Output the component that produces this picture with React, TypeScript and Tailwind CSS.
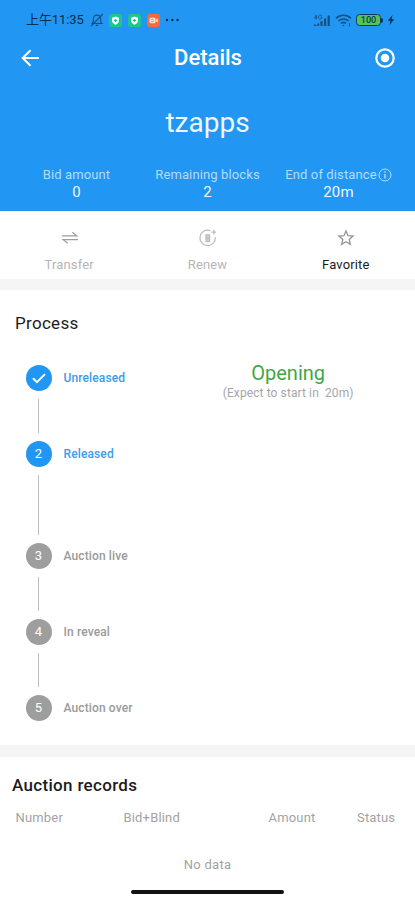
import { ReactNode } from "react";

type Step = { num: number; label: string; state: "done" | "active" | "todo"; line?: string };

const STEPS: Step[] = [
  { num: 1, label: "Unreleased", state: "done", line: "h-[76px]" },
  { num: 2, label: "Released", state: "active", line: "h-[102px]" },
  { num: 3, label: "Auction live", state: "todo", line: "h-[76px]" },
  { num: 4, label: "In reveal", state: "todo", line: "h-[76px]" },
  { num: 5, label: "Auction over", state: "todo" },
];

function StatusBar() {
  return (
    <div className="flex h-10 items-center justify-between pl-[26px] pr-[20px] text-[#14507f]">
      <div className="flex items-center">
        <span className="w-[60px] text-[13px] leading-5 tracking-[-0.1px] whitespace-nowrap text-[#0b2d4d]">上午11:35</span>
        <svg className="ml-[4px]" width="14" height="14" viewBox="0 0 14 14" fill="none" stroke="currentColor" strokeWidth="1.1">
          <path d="M2 10.5h10l-1.3-1.8V6c0-2.2-1.4-3.9-3.7-3.9S3.3 3.8 3.3 6v2.7L2 10.5ZM5.7 12.4h2.6M1.2 13 12.8 1" />
        </svg>
        <ShieldBadge className="ml-[5px]" />
        <ShieldBadge className="ml-[6px]" />
        <svg className="ml-[6px]" width="13" height="13" viewBox="0 0 13 13">
          <rect width="13" height="13" rx="2.5" fill="#f46a3c" />
          <rect x="2.5" y="3.7" width="6" height="5.6" rx="1.2" fill="#ffe3d8" />
          <path d="M9 5.7 10.8 4.3v4.4L9 7.3z" fill="#ffe3d8" />
          <path d="M4 5.5h3M4 7.5h3" stroke="#f46a3c" strokeWidth=".7" />
        </svg>
        <svg className="ml-[5px]" width="15" height="4" viewBox="0 0 15 4" fill="#0b2d4d">
          <circle cx="2" cy="2" r="1.2" />
          <circle cx="7.3" cy="2" r="1.2" />
          <circle cx="12.6" cy="2" r="1.2" />
        </svg>
      </div>
      <div className="flex items-center">
        <svg width="18" height="13" viewBox="0 0 18 13" fill="currentColor">
          <path d="M0 12h2v-1.6H0zM3.2 12h2V9.5h-2zM6.4 12h2.200V7.300H6.400zM10 12h2.200V4.500H10zM13.600 12h2.200V1.500h-2.200z" />
          <path d="M2.400 5.200V1L.4 4h3M7.800 1.800C6.400.4 4.500 1.200 4.500 3s1.900 2.600 3.300 1.300V3.200H6.500" fill="none" stroke="currentColor" strokeWidth=".8" />
        </svg>
        <svg className="ml-[3px]" width="18" height="13" viewBox="0 0 18 13" fill="none" stroke="currentColor" strokeWidth="1.6">
          <path d="M1 4.3c4.2-4 10.800-4 15 0M3.5 7c2.800-2.700 7.200-2.700 10 0M6 9.5c1.500-1.300 3.500-1.300 5 0" />
          <circle cx="8.5" cy="11.5" r=".8" fill="currentColor" stroke="none" />
          <path d="M14.5 9v3.5" strokeWidth="1" />
        </svg>
        <div className="ml-[3px] flex h-[12px] w-[25px] items-center justify-center rounded-[3.5px] border-[1.5px] border-[#0d3a63] bg-[#55c552] text-[9px] leading-none font-medium text-[#0d3a63]">
          100
        </div>
        <div className="h-[5px] w-[2px] rounded-r-sm bg-[#0d3a63]" />
        <svg className="ml-[4px]" width="8" height="12" viewBox="0 0 8 12" fill="#0b2d4d">
          <path d="M5.500 1 .8 6.700h2.700L2.500 11l4.700-5.800H4.500z" />
        </svg>
      </div>
    </div>
  );
}

function ShieldBadge({ className }: { className: string }) {
  return (
    <svg className={className} width="13" height="13" viewBox="0 0 13 13">
      <rect width="13" height="13" rx="2.5" fill="#1bc692" />
      <path d="M6.500 2.500 10 3.800v2.700c0 2.100-1.500 3.300-3.500 4.200C4.500 9.800 3 8.600 3 6.500V3.800z" fill="#fff" />
      <path d="M6.500 4.900v3M5 6.400h3" stroke="#1bc692" strokeWidth="1.100" />
    </svg>
  );
}

function Stat({ label, value }: { label: ReactNode; value: string }) {
  return (
    <div className="flex flex-1 flex-col items-center">
      <span className="flex h-[18px] items-center text-[13px] leading-[18px] tracking-[0.12px] whitespace-nowrap text-[#b5dcfb]">
        {label}
      </span>
      <span className="text-[15px] leading-[17px] tracking-[0.1px] text-[#f0f8ff]">{value}</span>
    </div>
  );
}

function Action({ icon, label, className }: { icon: ReactNode; label: string; className: string }) {
  return (
    <div className="flex flex-1 flex-col items-center pt-[17px]">
      <div className="flex h-5 items-center">{icon}</div>
      <span className={`mt-[8px] text-[13px] leading-[18px] tracking-[0.15px] ${className}`}>{label}</span>
    </div>
  );
}

function StepRow({ num, label, state, line }: Step) {
  const on = state !== "todo";
  return (
    <div className={`flex ${line ?? "h-[26px]"}`}>
      <div className="flex w-[26px] flex-col items-center">
        <div className={`flex size-[26px] shrink-0 items-center justify-center rounded-full text-[13px] text-white ${on ? "bg-[#2196f3]" : "bg-[#9e9e9e]"}`}>
          {state === "done" ? (
            <svg width="16" height="16" viewBox="0 0 16 16" fill="none" stroke="white" strokeWidth="2">
              <path d="m2 8.300 3.900 3.900L14 4.100" />
            </svg>
          ) : (
            num
          )}
        </div>
        {line && <div className="my-2 w-px flex-1 bg-[#bdbdbd]" />}
      </div>
      <span className={`ml-3 text-[12px] leading-[26px] font-medium tracking-[0.12px] ${on ? "text-[#3d9be9]" : "text-[#9a9a9a]"}`}>
        {label}
      </span>
    </div>
  );
}

export default function App() {
  return (
    <div className="flex h-[900px] w-[415px] flex-col overflow-hidden bg-white font-['Roboto','Noto_Sans_CJK_SC',sans-serif]">
      <header className="h-[211px] shrink-0 bg-[#2196f3]">
        <StatusBar />
        <div className="flex h-9 items-center justify-between pl-[21px] pr-[20px]">
          <svg width="20" height="18" viewBox="0 0 20 18" fill="none" stroke="white" strokeWidth="2">
            <path d="M9.500 1.200 1.700 9l7.800 7.800M1.700 9H18" />
          </svg>
          <h1 className="text-[22px] leading-9 font-medium text-white">Details</h1>
          <svg width="20" height="20" viewBox="0 0 20 20" fill="none">
            <circle cx="10" cy="10" r="8.700" stroke="white" strokeWidth="2.200" />
            <circle cx="10" cy="10" r="4.300" fill="white" />
          </svg>
        </div>
        <div className="mt-[29px] text-center text-[28px] leading-9 text-[#eef7ff]">tzapps</div>
        <div className="mt-[25px] flex px-[11px]">
          <Stat label="Bid amount" value="0" />
          <Stat label="Remaining blocks" value="2" />
          <Stat
            label={
              <>
                End of distance
                <svg className="ml-px" width="14" height="14" viewBox="0 0 14 14" fill="none" stroke="currentColor">
                  <circle cx="7" cy="7" r="6" />
                  <path d="M7 3.200v1.500M7 6v4.500" strokeWidth="1.400" />
                </svg>
              </>
            }
            value="20m"
          />
        </div>
      </header>

      <div className="flex h-[68px] shrink-0">
        <Action
          label="Transfer"
          className="text-[#b5b5b5]"
          icon={
            <svg className="ml-[2px]" width="18" height="16" viewBox="0 0 18 16" fill="none" stroke="#9e9e9e" strokeWidth="1.200">
              <path d="M1 5.800h14.800L11.300 2.300M17 9.700H2.200l4.500 3.500" />
            </svg>
          }
        />
        <Action
          label="Renew"
          className="text-[#b5b5b5]"
          icon={
            <svg className="ml-px" width="20" height="20" viewBox="0 0 20 20" fill="none" stroke="#bcbcbc" strokeWidth="1.200">
              <path d="M12.500 2.700A7.700 7.700 0 1 0 17.300 9" />
              <path d="M15.800 1.800v4.600M13.500 4.100h4.600" />
              <rect x="8" y="6.800" width="3.600" height="6.800" fill="#cfcfcf" />
              <path d="M8 10.200h3.600" />
            </svg>
          }
        />
        <Action
          label="Favorite"
          className="text-[#1c1c1c]"
          icon={
            <svg className="ml-px" width="18" height="18" viewBox="0 0 18 18" fill="none" stroke="#969696" strokeWidth="1.300">
              <path d="m9 2 2 4.700 5.100.4-3.900 3.300 1.200 5L9 12.700l-4.400 2.700 1.200-5-3.900-3.300L7 6.700z" />
            </svg>
          }
        />
      </div>
      <div className="h-[11px] shrink-0 bg-[#f5f5f5]" />

      <section className="h-[455px] shrink-0">
        <h2 className="pt-[21px] pl-[15px] text-[17px] leading-6 tracking-[0.3px] text-[#1c1c1c]">Process</h2>
        <div className="mt-[30px] flex pl-[25.500px]">
          <div className="w-[136px]">
            {STEPS.map((step) => (
              <StepRow key={step.num} {...step} />
            ))}
          </div>
          <div className="flex w-[254px] flex-col items-center">
            <span className="mt-[-4px] text-[20px] leading-[25px] text-[#3fa843]">Opening</span>
            <span className="text-[12px] leading-[14px] tracking-[0.1px] whitespace-pre text-[#a6a6a6]">(Expect to start in  20m)</span>
          </div>
        </div>
      </section>
      <div className="h-3 shrink-0 bg-[#f5f5f5]" />

      <section className="flex flex-col">
        <h2 className="pt-[16px] pl-[12px] text-[17px] leading-6 font-medium tracking-[0.32px] text-[#1c1c1c]">Auction records</h2>
        <div className="mt-[12px] flex pl-[15.500px] text-[13px] leading-[18px] tracking-[0.17px] text-[#a3a3a3]">
          <span className="w-[108px]">Number</span>
          <span className="w-[145px]">Bid+Blind</span>
          <span className="w-[88.500px]">Amount</span>
          <span>Status</span>
        </div>
        <div className="mt-[28px] text-center text-[13px] leading-[20px] tracking-[0.300px] text-[#a3a3a3]">No data</div>
        <div className="mt-[15px] h-[4px] w-[153px] self-center rounded-full bg-[#111]" />
      </section>
    </div>
  );
}
